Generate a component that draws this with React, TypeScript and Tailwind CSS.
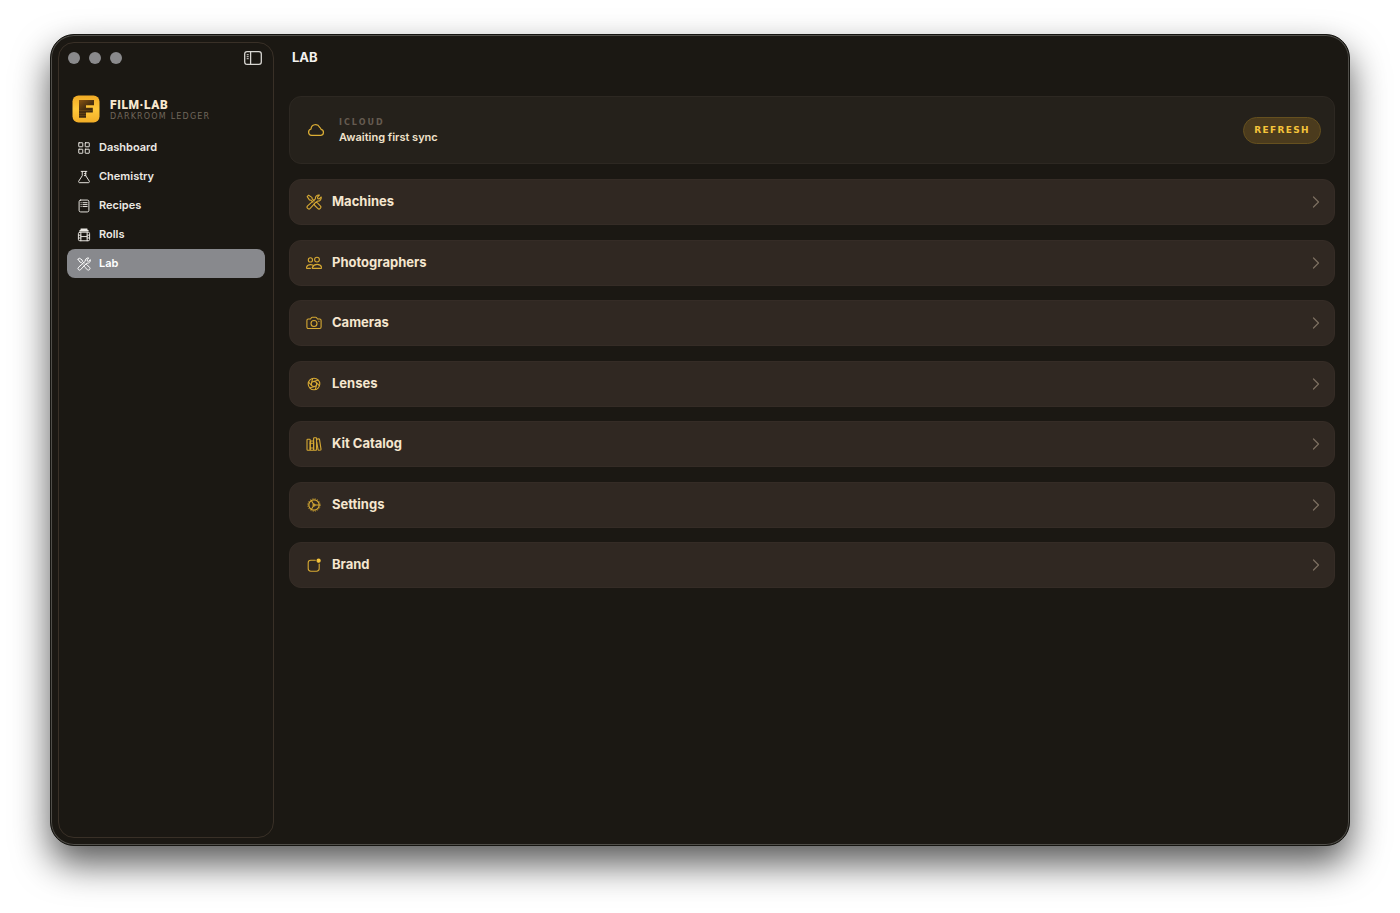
import type { ReactNode } from "react";

const Icon = ({ children, className }: { children: ReactNode; className?: string }) => (
  <svg
    viewBox="0 0 16 16"
    fill="none"
    stroke="currentColor"
    strokeWidth="1.1"
    strokeLinecap="round"
    strokeLinejoin="round"
    aria-hidden="true"
    className={className}>
    {children}
  </svg>
);

const grid = (
  <>
    <rect x="2" y="2" width="4.6" height="4.6" rx="0.4" />
    <rect x="9.4" y="2" width="4.6" height="4.6" rx="0.4" />
    <rect x="2" y="9.4" width="4.6" height="4.6" rx="0.4" />
    <rect x="9.4" y="9.4" width="4.6" height="4.6" rx="0.4" />
  </>
);

const flask = (
  <path d="M4.8 1.6h6.4M6 1.6v4.9L2 12.7c-.5.9 0 1.8 1 1.8h10c1 0 1.500-.9 1-1.8L10 6.500V1.600M8.400 4.200H10M8.400 6.400H10" />
);

const notebook = (
  <>
    <rect x="2.4" y="1.2" width="11.2" height="13.6" rx="1.8" />
    <path d="M4.600 4.200h.2M4.600 6.400h.2M4.600 8.600h.2M6.800 4.200h4.800M6.800 6.400h4.800M6.800 8.600h4.800" />
  </>
);

const film = (
  <>
    <path d="M4.600 1.400h6.800M3.400 3.200h9.200" strokeWidth="1.600" />
    <rect x="1.600" y="4.800" width="12.800" height="9.800" rx="1.600" />
    <path d="M4.400 5v9.600M11.600 5v9.600M4.400 9.800h7.200M2 8.200h2.400M2 11.400h2.400M11.600 8.200H14M11.600 11.400H14" />
  </>
);

const tools = (
  <>
    <path d="M1.200 2.600 2.600 1.200l3.300 2.200.3 1.500 2 2M1.200 2.600l2.200 3.300 1.500.3 2 2M9.400 8.600c.7-.4 1.500-.2 2 .3l2.900 2.900a1.800 1.800 0 0 1-2.600 2.600l-2.900-2.900c-.5-.5-.7-1.300-.3-2" />
    <path d="M6.900 7.200 9.400 4.900a3.400 3.400 0 0 1 4-3.800l-1.900 2.100.3 1.400 1.400.3 2-1.900a3.400 3.400 0 0 1-3.800 4.100L9.200 8.900l-5 5.500a1.700 1.700 0 0 1-2.600-2.500z" />
  </>
);

const people = (
  <>
    <circle cx="4.400" cy="4.900" r="2.100" />
    <circle cx="11" cy="4.600" r="2.400" />
    <path d="M6.400 13.400h8.700c.5 0 .8-.5.600-1-.6-1.800-2.400-3-4.500-3s-4 1.200-4.900 3c-.2.500 0 1 .1 1zM4.400 13.400H.9c-.5 0-.7-.5-.5-1C1 10.700 2.700 9.600 4.600 9.600c.8 0 1.500.2 2.100.5" />
  </>
);

const camera = (
  <>
    <path d="M2.300 4h2.200l.9-1.300c.2-.3.5-.5.9-.5h3.400c.4 0 .7.200.9.500l.9 1.300h2.200c.8 0 1.400.6 1.400 1.400v6.700c0 .8-.6 1.400-1.400 1.400H2.300c-.8 0-1.400-.6-1.400-1.400V5.400C.9 4.600 1.500 4 2.300 4z" />
    <circle cx="8" cy="8.500" r="3" />
    <path d="M12.700 6.200h.3" />
  </>
);

const aperture = (
  <>
    <circle cx="8" cy="8" r="5.800" />
    <path d="M8 5.200 10.500 6.600v2.800L8 10.800 5.500 9.400V6.600zM8 5.200l4-.9M10.500 6.600l2.700 3.100M10.500 9.400l-1.200 4M8 10.800l-4 .9M5.500 9.400 2.800 6.300M5.500 6.600l1.200-4" />
  </>
);

const books = (
  <>
    <rect x="1" y="3.200" width="3.200" height="11" rx=".7" />
    <rect x="4.200" y="5" width="3.400" height="9.200" rx=".7" />
    <rect x="7.600" y="1.800" width="3" height="12.400" rx=".7" />
    <path d="m10.700 3.200 2-.3c.4 0 .7.100.8.500l1.500 9.800c0 .4-.1.700-.5.800l-1.700.2c-.4 0-.7-.1-.7-.5L10.700 6" />
    <path d="M4.200 7.300h3.400M4.200 12h3.400" />
  </>
);

const gear = (
  <>
    <circle cx="8" cy="8" r="5.200" strokeWidth="1.200" />
    <circle cx="8" cy="8" r="6.200" strokeDasharray="1.200 1.230" strokeWidth=".8" strokeLinecap="butt" />
    <path d="M9.200 8h3.800M7.400 7 5.300 3.500M7.400 9l-2.100 3.500" />
    <circle cx="8" cy="8" r="1" />
  </>
);

const badge = (
  <>
    <path d="M9.300 3.200H4.800A2.600 2.600 0 0 0 2.200 5.800v5.800a2.600 2.600 0 0 0 2.600 2.600h5.800a2.600 2.600 0 0 0 2.600-2.600V7" />
    <circle cx="12.600" cy="3.700" r="1.600" fill="#f8c63c" stroke="#f8c63c" />
  </>
);

const navItems = [
  { title: "Dashboard", icon: grid },
  { title: "Chemistry", icon: flask },
  { title: "Recipes", icon: notebook },
  { title: "Rolls", icon: film },
  { title: "Lab", icon: tools, active: true },
];

const sections = [
  { title: "Machines", icon: tools },
  { title: "Photographers", icon: people },
  { title: "Cameras", icon: camera },
  { title: "Lenses", icon: aperture },
  { title: "Kit Catalog", icon: books },
  { title: "Settings", icon: gear },
  { title: "Brand", icon: badge },
];

const Logo = () => (
  <svg viewBox="0 0 28 28" className="size-7 shrink-0" aria-hidden="true">
    <defs>
      <linearGradient id="tile" x1="0" y1="0" x2="0" y2="1">
        <stop offset="0" stopColor="#f0aa25" />
        <stop offset="0.5" stopColor="#ffc83a" />
        <stop offset="1" stopColor="#f2ad27" />
      </linearGradient>
      <linearGradient id="mark" x1="0" y1="0" x2="0.6" y2="1">
        <stop offset="0" stopColor="#8a5512" />
        <stop offset="0.5" stopColor="#4a3010" />
        <stop offset="1" stopColor="#35240f" />
      </linearGradient>
    </defs>
    <rect x="0.5" y="0.5" width="27" height="27" rx="6" fill="url(#tile)" />
    <path d="M7 5h15v5.200h-8v2.600h6.800v4.800H14v5.200H7z" fill="url(#mark)" />
    <path d="M7 15.500h13M7 18.500h7M7 20.500h7" stroke="#a86c18" strokeWidth="0.3" />
  </svg>
);

const Sidebar = () => (
  <aside className="flex w-[216px] shrink-0 flex-col rounded-2xl border border-[#393027] px-2">
    <div className="flex h-[30px] items-center justify-between pl-px pr-[3px]">
      <div className="flex gap-[9px]">
        <span className="size-3 rounded-full bg-[#8a8a8c]" />
        <span className="size-3 rounded-full bg-[#8a8a8c]" />
        <span className="size-3 rounded-full bg-[#8a8a8c]" />
      </div>
      <button type="button" aria-label="Toggle sidebar" className="text-[#d8d6d2]">
        <svg viewBox="0 0 18 14" fill="none" stroke="currentColor" className="h-3.5 w-[18px]">
          <rect x="0.7" y="0.7" width="16.6" height="12.6" rx="2.4" strokeWidth="1.3" />
          <path d="M6.600 1v12" strokeWidth="1.3" />
          <path d="M2.700 3.700h2M2.700 5.700h2M2.700 7.700h2" />
        </svg>
      </button>
    </div>
    <div className="mt-5 flex items-center gap-2.5 px-[5px] py-0.5">
      <Logo />
      <div className="pt-1 leading-3">
        <div className="font-['Roboto'] text-xs leading-3 font-black tracking-wider text-[#f8e8cf]">
          FILM·LAB
        </div>
        <div className="font-['DejaVu_Sans'] text-[8px] leading-3 tracking-[0.15em] text-[#71675b]">
          DARKROOM LEDGER
        </div>
      </div>
    </div>
    <nav className="mt-2">
      {navItems.map(({ title, icon, active }) => (
        <a
          key={title}
          href="#"
          aria-current={active ? "page" : undefined}
          className={`flex h-[29px] items-center gap-2 rounded-lg px-2.5 text-[11px] font-semibold ${
            active ? "bg-[#88898d] text-white" : "text-[#ece9e4]"
          }`}>
          <Icon className="size-3.5">{icon}</Icon>
          {title}
        </a>
      ))}
    </nav>
  </aside>
);

const SyncCard = () => (
  <section className="flex items-center rounded-xl border border-[#2d2822] bg-[#25211b] py-[18px] pl-[17px] pr-[13px]">
    <Icon className="size-[18px] text-[#dcae35]">
      <path d="M4.100 12.800A2.900 2.900 0 0 1 3.600 7.100 4 4 0 0 1 11.200 5.500a3 3 0 0 1 1.300 2 2.700 2.700 0 0 1-.1 5.300z" />
    </Icon>
    <div className="ml-3.5 flex-1 leading-[15px]">
      <div className="font-['DejaVu_Sans'] text-[8px] leading-[15px] font-bold tracking-[0.25em] text-[#655b50]">
        ICLOUD
      </div>
      <div className="text-[11px] leading-[15px] font-semibold text-[#f0e2cb]">
        Awaiting first sync
      </div>
    </div>
    <button
      type="button"
      className="flex h-[27px] items-center rounded-full border border-[#65501f] bg-[#4b3b1d] px-2.5 font-['DejaVu_Sans'] text-[9px] leading-3 font-bold tracking-[0.15em] text-[#f5c43a]">
      REFRESH
    </button>
  </section>
);

const SectionRow = ({ title, icon }: { title: string; icon: ReactNode }) => (
  <a
    href="#"
    className="flex h-[46px] items-center rounded-xl border border-[#352c26] bg-[#302822] pl-4 pr-3.5 text-[13px] font-bold text-[#f5e6cf]">
    <Icon className="size-4 text-[#d6a933]">{icon}</Icon>
    <span className="ml-2.5 flex-1">{title}</span>
    <svg
      viewBox="0 0 8 12"
      fill="none"
      stroke="#7d7061"
      strokeWidth="1.2"
      strokeLinecap="round"
      strokeLinejoin="round"
      aria-hidden="true"
      className="h-3 w-2">
      <path d="m1.500 1 5 5-5 5" />
    </svg>
  </a>
);

export default function App() {
  return (
    <div className="flex min-h-screen bg-white px-[50px] pt-[34px] pb-[67px] font-['Inter',sans-serif]">
      <div className="flex flex-1 rounded-3xl border border-[#161511] bg-[#1b1813] p-[7px] shadow-[inset_0_0_0_1px_#504e49,0_18px_36px_rgba(0,0,0,0.65)]">
        <Sidebar />
        <main className="flex-1 pl-[15px] pr-[7px]">
          <h1 className="flex h-8 items-center px-[3px] text-[13px] font-bold text-[#f3f1ee]">LAB</h1>
          <div className="mt-[22px] flex flex-col gap-[15px]">
            <SyncCard />
            <div className="grid h-[409px] content-between">
              {sections.map(({ title, icon }) => (
                <SectionRow key={title} title={title} icon={icon} />
              ))}
            </div>
          </div>
        </main>
      </div>
    </div>
  );
}
